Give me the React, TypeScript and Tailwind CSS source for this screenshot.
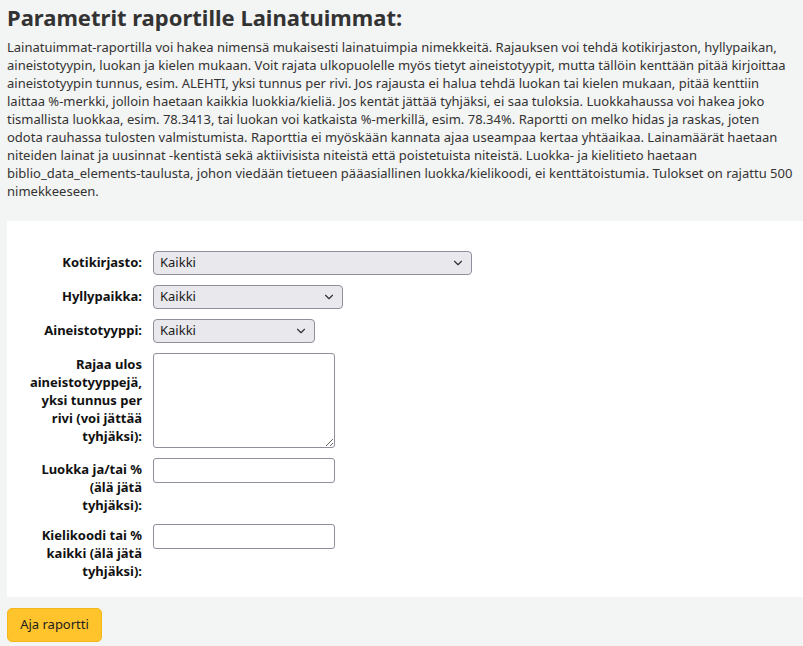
import { ChevronDown } from "lucide-react";

const intro =
  "Lainatuimmat-raportilla voi hakea nimensä mukaisesti lainatuimpia nimekkeitä. Rajauksen voi tehdä kotikirjaston, hyllypaikan, aineistotyypin, luokan ja kielen mukaan. Voit rajata ulkopuolelle myös tietyt aineistotyypit, mutta tällöin kenttään pitää kirjoittaa aineistotyypin tunnus, esim. ALEHTI, yksi tunnus per rivi. Jos rajausta ei halua tehdä luokan tai kielen mukaan, pitää kenttiin laittaa %-merkki, jolloin haetaan kaikkia luokkia/kieliä. Jos kentät jättää tyhjäksi, ei saa tuloksia. Luokkahaussa voi hakea joko tismallista luokkaa, esim. 78.3413, tai luokan voi katkaista %-merkillä, esim. 78.34%. Raportti on melko hidas ja raskas, joten odota rauhassa tulosten valmistumista. Raporttia ei myöskään kannata ajaa useampaa kertaa yhtäaikaa. Lainamäärät haetaan niteiden lainat ja uusinnat -kentistä sekä aktiivisista niteistä että poistetuista niteistä. Luokka- ja kielitieto haetaan biblio_data_elements-taulusta, johon viedään tietueen pääasiallinen luokka/kielikoodi, ei kenttätoistumia. Tulokset on rajattu 500 nimekkeeseen.";

function Select({ width }: { width: string }) {
  return (
    <div
      className={`${width} h-[24px] flex items-center justify-between rounded-[4px] border border-[#8f8f9d] bg-[#e9e9ed] pl-[6px] pr-[6px] text-[13px] text-[#1b1b1b]`}
    >
      <span>Kaikki</span>
      <ChevronDown size={14} strokeWidth={2} className="text-[#333]" />
    </div>
  );
}

function Row({ label, children }: { label: string; children: React.ReactNode }) {
  return (
    <div className="flex items-start gap-[11px]">
      <label className="w-[115px] shrink-0 pt-[2px] text-right text-[13px] font-bold leading-[18px] text-[#111]">
        {label}
      </label>
      {children}
    </div>
  );
}

export default function App() {
  return (
    <div
      className="min-h-[646px] bg-[#f3f4f4] px-[7px] text-[#333]"
      style={{ fontFamily: '"Noto Sans", "Open Sans", sans-serif' }}
    >
      <h1 className="pt-[3px] text-[22px] font-bold leading-[28px] text-[#333]">
        Parametrit raportille Lainatuimmat:
      </h1>
      <p className="mt-[7px] text-[13px] leading-[18px] text-[#333]">{intro}</p>

      <div className="mt-[21px] -mr-[7px] bg-white pb-[17px] pl-[20px] pt-[30px]">
        <div className="flex flex-col gap-[10px]">
          <Row label="Kotikirjasto:">
            <Select width="w-[319px]" />
          </Row>
          <Row label="Hyllypaikka:">
            <Select width="w-[190px]" />
          </Row>
          <Row label="Aineistotyyppi:">
            <Select width="w-[162px]" />
          </Row>
          <Row label="Rajaa ulos aineistotyyppejä, yksi tunnus per rivi (voi jättää tyhjäksi):">
            <textarea className="h-[95px] w-[182px] rounded-[3px] border border-[#8f8f9d] bg-white" />
          </Row>
          <Row label="Luokka ja/tai % (älä jätä tyhjäksi):">
            <input className="h-[25px] w-[182px] rounded-[3px] border border-[#8f8f9d] bg-white" />
          </Row>
          <Row label="Kielikoodi tai % kaikki (älä jätä tyhjäksi):">
            <input className="h-[25px] w-[182px] rounded-[3px] border border-[#8f8f9d] bg-white" />
          </Row>
        </div>
      </div>

      <button className="mt-[11px] h-[34px] w-[95px] rounded-[5px] border border-[#f5b81a] bg-[#ffc32b] text-[13px] text-[#222]">
        Aja raportti
      </button>
    </div>
  );
}
